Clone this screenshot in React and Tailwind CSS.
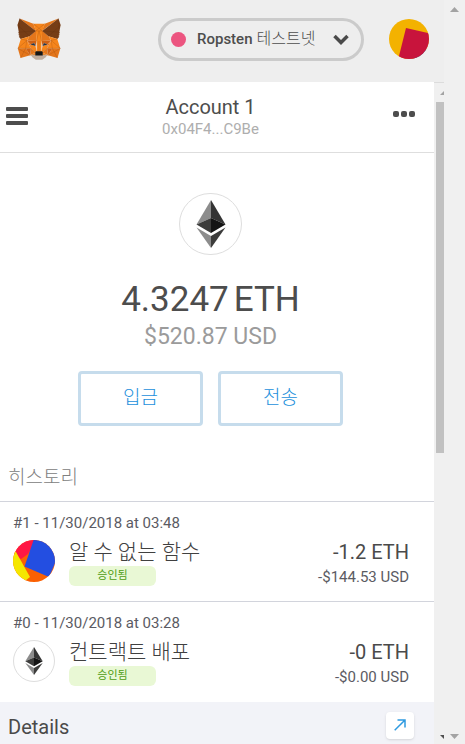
const roboto = "font-[Roboto,'Noto_Sans_CJK_KR',sans-serif]";

const foxShapes = [
  ["#e2761b", "274.1,35.5 174.6,109.4 193,65.8"],
  ["#e4761b", "44.4,35.5 143.1,110.1 125.6,65.8"],
  ["#e4761b", "238.3,206.8 211.8,247.4 268.5,263 284.8,207.7"],
  ["#e4761b", "33.9,207.7 50.1,263 106.8,247.4 80.3,206.8"],
  ["#e4761b", "103.6,138.2 87.8,162.1 144.1,164.6 142.1,104.1"],
  ["#e4761b", "214.9,138.2 175.9,103.4 174.6,164.6 230.8,162.1"],
  ["#e4761b", "106.8,247.4 140.6,230.9 111.4,208.1"],
  ["#e4761b", "177.9,230.9 211.8,247.4 207.1,208.1"],
  ["#ec7f1c", "211.8,247.4 177.9,230.9 180.6,253"],
  ["#ec7f1c", "106.8,247.4 138.1,253 140.6,230.9"],
  ["#cd6116", "106.8,247.4 111.6,206.8 80.3,207.7"],
  ["#cd6116", "207,206.8 211.8,247.4 238.3,207.7"],
  ["#cd6116", "230.8,162.1 174.6,164.6 179.8,193.5 188.1,176.1 208.1,185.2"],
  ["#cd6116", "110.6,185.2 130.6,176.1 138.8,193.5 144.1,164.6 87.8,162.1"],
  ["#e4751f", "87.8,162.1 111.4,208.1 110.6,185.2"],
  ["#e4751f", "208.1,185.2 207.1,208.1 230.8,162.1"],
  ["#f6851b", "179.8,193.5 173.1,227.6 177.9,230.9 207.1,208.1 208.1,185.2"],
  ["#f6851b", "110.6,185.2 111.4,208.1 140.6,230.9 145.4,227.6 138.8,193.5"],
  ["#c0ad9e", "180.600,246 138.100,246 112,242 117.8,256.4 140.1,271.9 178.4,271.9 200.8,256.4 206,242"],
  ["#763d16", "278.3,114.2 286.8,73.4 274.1,35.5 177.9,106.9 214.9,138.2 267.2,153.5 278.8,140 273.8,136.4 281.8,129.1 275.6,124.3 283.6,118.2"],
  ["#763d16", "31.8,73.4 40.3,114.2 34.9,118.2 42.9,124.3 36.8,129.1 44.8,136.4 39.8,140 51.3,153.5 103.6,138.2 140.6,106.9 44.4,35.5"],
  ["#f6851b", "267.2,153.5 214.9,138.2 230.8,162.1 207.1,208.1 238.3,207.7 284.8,207.7"],
  ["#f6851b", "103.6,138.2 51.3,153.5 33.9,207.7 80.3,207.7 111.4,208.1 87.8,162.1"],
  ["#f6851b", "174.6,164.6 177.9,106.9 193.1,65.8 125.6,65.8 140.6,106.9 144.1,164.6 145.3,182.8 145.4,227.6 173.1,227.6 173.3,182.8"],
  ["#161616", "177,224 141,224 137,230 137,248 181,248 181,230"],
  ["#233447", "138.8,193.5 108,185 130.5,176"],
  ["#233447", "179.7,193.5 188,176 210,185"],
];

function Fox() {
  return (
    <svg className="h-[42px] w-11" viewBox="29 33 260 241" preserveAspectRatio="none" aria-label="MetaMask" role="img">
      {foxShapes.map(([fill, points]) => (
        <polygon key={points} fill={fill} points={points} />
      ))}
      <path
        d="M125.6 65.8 177.9 106.9M193 65.8 140.6 106.9M142 107h34M159 107l-15 58M159 107l16 58M159 165v60M51 153l36 9M34 207l54-45M50 263l30-56M268 263l-30-56M285 207l-54-45M267 153l-36 9M80 207l7-45M238 207l-7-45M34 207h77M285 207h-77M34 207l73 40M285 207l-73 40M111 208l30 23M207 208l-30 23"
        stroke="#9a4c12"
        strokeWidth="3"
        fill="none"
        opacity=".55"
      />
      <path d="M32 73l72 65M44 36l-4 78M40 114l100-7M287 73l-72 65M274 36l4 78M278 114l-100-7" stroke="#552a0c" strokeWidth="2" fill="none" opacity=".5" />
    </svg>
  );
}

function Ether({ className }) {
  return (
    <svg className={className} viewBox="0 0 30 48" preserveAspectRatio="none" aria-hidden="true">
      <path fill="#8c8c8c" d="M15 0v18L.5 24.5z" />
      <path fill="#343434" d="M15 0v18l14.500 6.500z" />
      <path fill="#3c3c3b" d="M15 18v15L.5 24.500z" />
      <path fill="#141414" d="M15 18v15l14.500-8.500z" />
      <path fill="#8c8c8c" d="M15 36v12L.5 27.500z" />
      <path fill="#3c3c3b" d="M15 36v12l14.500-20.500z" />
    </svg>
  );
}

function AccountIcon() {
  return (
    <svg className="size-10 rounded-full" viewBox="0 0 40 40" aria-hidden="true">
      <path fill="#f3b200" d="M0 0h40v40H0z" />
      <path fill="#2362e1" d="M24 40 40 28v12z" />
      <path fill="#c8143c" d="M17 9 45 15.500 38 32 28 42 8 45z" />
    </svg>
  );
}

function ContractIcon() {
  return (
    <svg className="size-[42px] rounded-full" viewBox="0 0 42 42" aria-hidden="true">
      <path fill="#fb6002" d="M0 0h42v42H0z" />
      <path fill="#ff1744" d="M0 0h24L15 14 8 19 0 15z" />
      <path fill="#f5e700" d="M-6 5 3 12l14 25-5 4H-6z" />
      <path fill="#234ee1" d="M22-4 50 5 36 37 11.500 26.500z" />
    </svg>
  );
}

function Transaction({ id, date, name, icon, eth, usd }) {
  return (
    <li className="flex h-[100px] flex-col border-t border-[#d2d4dc] px-[13px] pt-3">
      <span className="text-[15px] leading-[18px] text-[#5b5b63]">#{id} - {date}</span>
      <div className="mt-2 flex items-start">
        {icon}
        <div className="ml-[14px] flex flex-col">
          <span className="text-[21px] leading-6 font-light whitespace-nowrap text-[#404040]">{name}</span>
          <span className="mt-[2px] h-5 w-[87px] rounded-md bg-[#e9f8d5] text-center text-[11px] leading-5 text-[#4f9c13]">승인됨</span>
        </div>
        <div className="mr-3 ml-auto flex flex-col text-right">
          <span className="text-xl leading-6 text-[#4a4a4a]">{eth} ETH</span>
          <span className="mt-1 text-[15px] leading-[18px] text-[#5b5b63]">{usd} USD</span>
        </div>
      </div>
    </li>
  );
}

const actionClass = "h-[55px] w-[125px] rounded-[4px] border-3 border-[#c6dcec] bg-white text-[19px] font-light text-[#2390dc]";

export default function App() {
  return (
    <div className={`flex h-screen overflow-hidden bg-[#f0f0f0] ${roboto}`}>
      <div className="flex min-w-0 flex-1 flex-col">
        <header className="flex h-[82px] shrink-0 items-center bg-[#eee] pr-[15px] pb-1 pl-[17px]">
          <Fox />
          <button className="ml-auto flex h-[43px] w-[206px] items-center rounded-full border-3 border-[#cbcbcb] pr-3 pl-[10px]">
            <span className="size-[15px] rounded-full bg-[#ec5580]" />
            <span className="ml-[11px] flex items-center gap-1 text-[15px] font-medium whitespace-nowrap text-[#4d4d4d]">
              Ropsten <span className="text-base font-light">테스트넷</span>
            </span>
            <svg className="ml-auto h-[11px] w-4" viewBox="0 0 16 11" aria-hidden="true">
              <path d="M1.500 2 8 8.500 14.500 2" fill="none" stroke="#4a4a4a" strokeWidth="3.500" />
            </svg>
          </button>
          <button className="ml-[25px] shrink-0" aria-label="Accounts"><AccountIcon /></button>
        </header>

        <div className="flex min-h-0 flex-1">
          <main className="flex min-w-0 flex-1 flex-col bg-white">
            <div className="flex h-[71px] shrink-0 items-center justify-between border-b border-[#dedede] pr-[19px] pb-[2px] pl-[6px]">
              <button aria-label="Menu" className="flex w-[22px] flex-col gap-[3px]">
                <span className="h-1 rounded-[1px] bg-[#4d4d4d]" />
                <span className="h-1 rounded-[1px] bg-[#4d4d4d]" />
                <span className="h-1 rounded-[1px] bg-[#4d4d4d]" />
              </button>
              <div className="flex flex-col pt-[2px] text-center">
                <span className="text-xl leading-6 text-[#4d4d4d]">Account 1</span>
                <span className="text-[15px] leading-5 text-[#aeaeae]">0x04F4...C9Be</span>
              </div>
              <button aria-label="More options" className="mb-1 flex gap-[2px]">
                <span className="size-[6px] rounded-[2px] bg-[#4d4d4d]" />
                <span className="size-[6px] rounded-[2px] bg-[#4d4d4d]" />
                <span className="size-[6px] rounded-[2px] bg-[#4d4d4d]" />
              </button>
            </div>

            <section className="flex flex-col items-center pt-10 pr-[13px]">
              <div className="flex h-[62px] w-[63px] items-center justify-center rounded-full border border-[#dedede]">
                <Ether className="h-12 w-[30px]" />
              </div>
              <div className="mt-6 flex gap-[5px] text-[35px] leading-[42px] text-[#4d4d4d]">
                <span>4.3247</span>
                <span>ETH</span>
              </div>
              <span className="text-[23px] leading-8 text-[#9b9b9b]">$520.87 USD</span>
              <div className="mt-[18px] flex gap-[15px]">
                <button className={actionClass}>입금</button>
                <button className={actionClass}>전송</button>
              </div>
            </section>

            <h2 className="mt-[39px] mb-[11px] pl-2 text-[19px] leading-[25px] font-light text-[#808080]">히스토리</h2>
            <ul>
              <Transaction id="1" date="11/30/2018 at 03:48" name="알 수 없는 함수" icon={<ContractIcon />} eth="-1.2" usd="-$144.53" />
              <Transaction
                id="0"
                date="11/30/2018 at 03:28"
                name="컨트랙트 배포"
                icon={
                  <div className="flex size-[42px] items-center justify-center rounded-full border border-[#dedede]">
                    <Ether className="h-7 w-[18px]" />
                  </div>
                }
                eth="-0"
                usd="-$0.00"
              />
            </ul>
            <footer className="mt-px flex flex-1 items-center justify-between bg-[#f2f3f8] pt-2 pr-5 pl-2">
              <h3 className="text-xl text-[#4a4a4a]">Details</h3>
              <button aria-label="Open details" className="mb-1 flex h-[27px] w-7 items-center justify-center rounded-[4px] bg-white shadow-sm">
                <svg className="size-3" viewBox="0 0 12 12" aria-hidden="true">
                  <path d="M.7 11.300 10.500 1.500M3.500 1h7.500v7.500" fill="none" stroke="#2f9ae0" strokeWidth="1.500" />
                </svg>
              </button>
            </footer>
          </main>

          <div className="flex w-[10px] flex-col items-end overflow-hidden border-t border-[#dcdcdc] bg-[#f0f0f0]">
            <svg className="mt-2 h-[11px] w-1 shrink-0" viewBox="0 0 4 11" aria-hidden="true">
              <path d="M0 4 4 0v4z" fill="#a3a3a3" />
            </svg>
            <div className="h-[351px] w-2 bg-[#c1c1c1]" />
            <svg className="mt-auto mb-[5px] size-1 shrink-0" viewBox="0 0 4 4" aria-hidden="true">
              <path d="M0 0h4v4z" fill="#505050" />
            </svg>
          </div>
        </div>
      </div>

      <div className="flex w-[21px] flex-col items-center justify-between pt-[7px] pb-[5px]">
        <svg className="h-[5px] w-[9px]" viewBox="0 0 9 5" aria-hidden="true"><path d="M0 5 4.500 0 9 5z" fill="#a3a3a3" /></svg>
        <svg className="h-[5px] w-[9px]" viewBox="0 0 9 5" aria-hidden="true"><path d="M0 0 4.500 5 9 0z" fill="#a3a3a3" /></svg>
      </div>
    </div>
  );
}
